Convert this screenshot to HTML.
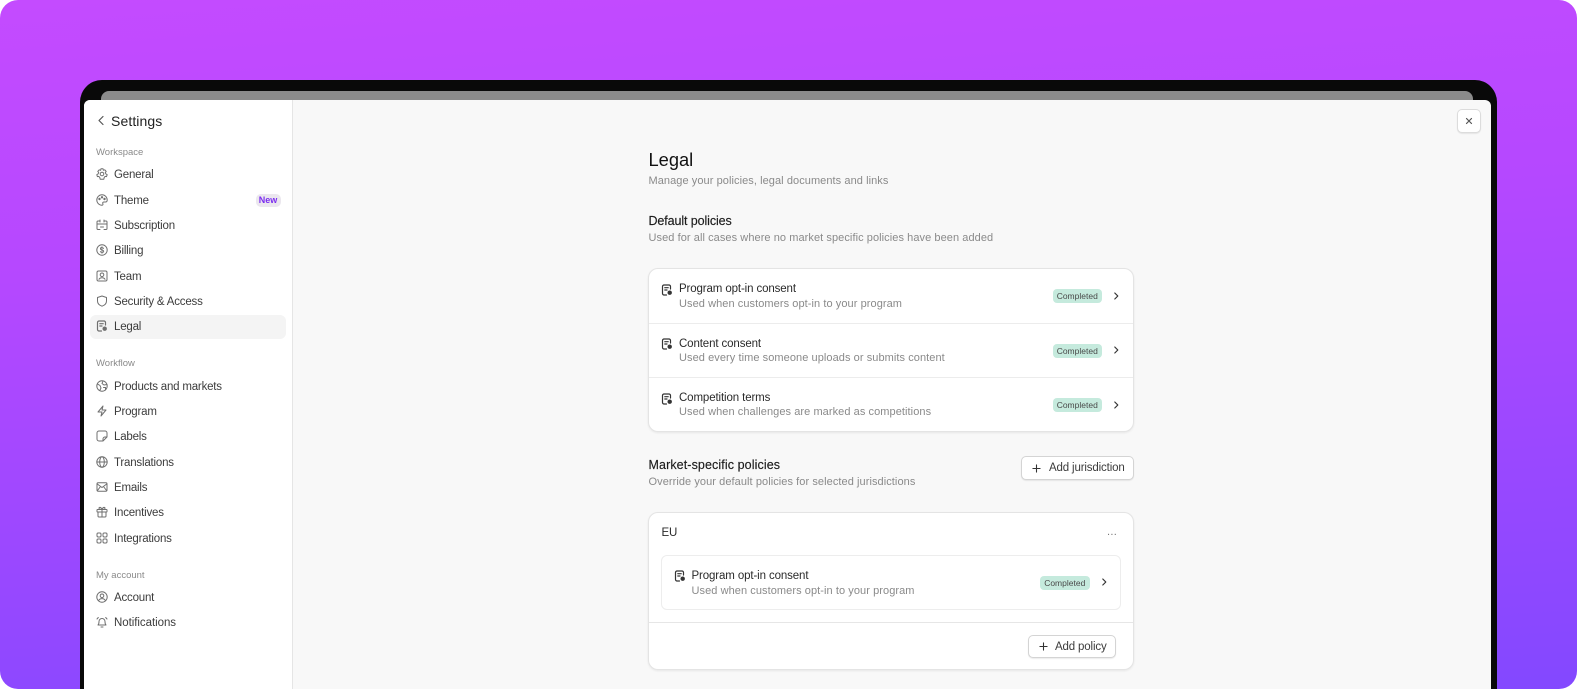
<!DOCTYPE html>
<html><head><meta charset="utf-8"><style>
html,body{margin:0;padding:0;background:#fff}
body{width:1577px;height:689px;overflow:hidden;position:relative;font-family:"Liberation Sans",sans-serif}
#bg{position:absolute;left:0;top:0;width:1577px;height:689px;border-radius:18px;overflow:hidden;background:linear-gradient(176deg,#c44bff 0%,#b548ff 35%,#8348ff 100%);filter:blur(.3px)}
#bg div,#bg svg.a{position:absolute}
.t{white-space:nowrap;line-height:16px;height:16px}
.n{font-size:11.5px;color:#3c3c3c;left:114px;letter-spacing:-.2px}
.h{font-size:9.5px;color:#8a8a8a;left:96px;letter-spacing:0}
.ti{font-size:11.5px;color:#2a2a2a;letter-spacing:-.12px}
.su{font-size:11px;color:#8a8a8a;letter-spacing:.07px}
.b{background:#c5eadd;border-radius:4px;width:49.5px;height:14px;font-size:8.5px;line-height:14px;text-align:center;color:#4a4a4a;letter-spacing:0}
.card{background:#fff;border:1px solid #e4e4e4;box-sizing:border-box;border-radius:10px;box-shadow:0 1px 2px rgba(0,0,0,.07)}
.btn{background:#fff;border:1px solid #d4d4d4;box-sizing:border-box;border-radius:5px;box-shadow:0 1px 1px rgba(0,0,0,.08)}
.bt{font-size:11.5px;color:#3c3c3c;letter-spacing:-.15px}
.l{height:1px;background:#ececec}
svg{fill:none;stroke:#6f6f6f;stroke-width:1.2;stroke-linecap:round;stroke-linejoin:round}
</style></head><body>
<svg width="0" height="0" style="position:absolute">
<defs>
<symbol id="doc" viewBox="0 0 12 12"><path d="M9.5 5V2.5A1.5 1.5 0 0 0 8 1H3A1.5 1.5 0 0 0 1.500 2.500V9.500A1.500 1.500 0 0 0 3 11H5.500M3.800 3.700H7.200M3.800 6H6"/><circle cx="8.700" cy="8.700" r="2.200" fill="currentColor" stroke="none"/></symbol>
<symbol id="chev" viewBox="0 0 8 10"><path d="M2.800 2L5.800 5L2.800 8"/></symbol>
<symbol id="plus" viewBox="0 0 10 10"><path d="M5 1V9M1 5H9"/></symbol>
</defs></svg>
<div id="bg">
<div style="left:80px;top:80px;width:1417px;height:640px;background:#090909;border-radius:22px 22px 0 0"></div>
<div style="left:101px;top:90.500px;width:1372px;height:20px;background:#8b8b8b;border-radius:8px 8px 0 0"></div>
<div style="left:84px;top:99.500px;width:1407px;height:600px;background:#f8f8f8;border-radius:6px 6px 0 0;overflow:hidden"></div>
<div style="left:84px;top:99.500px;width:208px;height:600px;background:#fff;border-right:1px solid #e5e5e5;border-radius:6px 0 0 0"></div>

<svg class="a" style="left:97px;top:115px;stroke:#555" width="8" height="11" viewBox="0 0 8 11"><path d="M6 1.500L2 5.500L6 9.500"/></svg>
<div class="t" style="left:111px;top:112.500px;font-size:14px;color:#222;letter-spacing:.1px">Settings</div>

<div class="t h" style="top:145px">Workspace</div>
<div class="t n" style="top:167px">General</div>
<svg class="a" style="left:96px;top:168px" width="12" height="12" viewBox="0 0 12 12"><path d="M5 .8H7L7.400 2.300L8.800 1.800L10.200 3.400L9.300 4.600L10 6L11.200 6.700L10.500 8.600L9.100 8.400L8.200 9.500L7.800 11.200H4.200L3.800 9.500L2.800 8.400L1.400 8.600L.8 6.700L2 6L2.700 4.600L1.800 3.400L3.200 1.800L4.600 2.300Z" stroke-width="1"/><circle cx="6" cy="6" r="1.800" stroke-width="1"/></svg>
<div class="t n" style="top:193px">Theme</div>
<svg class="a" style="left:96px;top:193.500px" width="12" height="12" viewBox="0 0 12 12"><path d="M6 .8A5.200 5.200 0 1 0 6 11.200C7 11.200 7.200 10.400 6.800 9.600C6.400 8.700 7 8 8 8H9.500C10.500 8 11.200 7.200 11.200 6A5.200 5.200 0 0 0 6 .8Z" stroke-width="1"/><circle cx="3.500" cy="5" r=".6" fill="#6f6f6f"/><circle cx="6" cy="3.300" r=".6" fill="#6f6f6f"/><circle cx="8.500" cy="5" r=".6" fill="#6f6f6f"/></svg>
<div class="t" style="left:255.500px;top:193.500px;width:25px;height:13.500px;background:#ebe7ee;border-radius:5px;font-size:9px;line-height:13.500px;font-weight:700;color:#7c2df0;text-align:center">New</div>
<div class="t n" style="top:218px">Subscription</div>
<svg class="a" style="left:96px;top:218.500px" width="12" height="12" viewBox="0 0 12 12"><path d="M4 2H2A1 1 0 0 0 1 3V9.500A1 1 0 0 0 2 10.500H4M8 2H10A1 1 0 0 1 11 3V9.500A1 1 0 0 1 10 10.500H8M1 5H11M4 1V3M8 1V3M4.500 8H7.500" stroke-width="1"/></svg>
<div class="t n" style="top:243px">Billing</div>
<svg class="a" style="left:96px;top:244px" width="12" height="12" viewBox="0 0 12 12"><circle cx="6" cy="6" r="5.200" stroke-width="1"/><path d="M7.600 4.500C7.300 3.800 6.700 3.500 6 3.500C5.100 3.500 4.400 4 4.400 4.700C4.400 6.300 7.700 5.600 7.700 7.300C7.700 8 7 8.500 6 8.500C5.200 8.500 4.600 8.200 4.300 7.500M6 2.700V9.300" stroke-width=".9"/></svg>
<div class="t n" style="top:269px">Team</div>
<svg class="a" style="left:96px;top:269.500px" width="12" height="12" viewBox="0 0 12 12"><rect x="1" y="1" width="10" height="10" rx="1.500" stroke-width="1"/><circle cx="6" cy="4.800" r="1.800" stroke-width="1"/><path d="M3 9.300C3.500 8 4.600 7.700 6 7.700S8.500 8 9 9.300" stroke-width="1"/></svg>
<div class="t n" style="top:294px">Security &amp; Access</div>
<svg class="a" style="left:96px;top:294.500px" width="12" height="12" viewBox="0 0 12 12"><path d="M6 1L10.500 2.500V6C10.500 8.700 8.500 10.300 6 11.200C3.500 10.300 1.500 8.700 1.500 6V2.500Z" stroke-width="1"/></svg>
<div style="left:90px;top:314.500px;width:196px;height:24px;background:#f4f4f4;border-radius:6px"></div>
<div class="t n" style="top:319px">Legal</div>
<svg class="a" style="left:96px;top:320px;color:#6f6f6f" width="12" height="12"><use href="#doc"/></svg>

<div class="t h" style="top:356px">Workflow</div>
<div class="t n" style="top:379px">Products and markets</div>
<svg class="a" style="left:96px;top:379.500px" width="12" height="12" viewBox="0 0 12 12"><circle cx="6" cy="6" r="5.200" stroke-width="1"/><path d="M1.500 4L4 5.500L5 8L3.800 10.500M7 1L6 3.500L8 5L11 4.500M7.500 7.500L9.500 7.500L9.500 10" stroke-width="1"/></svg>
<div class="t n" style="top:404px">Program</div>
<svg class="a" style="left:96px;top:404.500px" width="12" height="12" viewBox="0 0 12 12"><path d="M7 1L2 7H6L5 11L10 5H6Z" stroke-width="1"/></svg>
<div class="t n" style="top:429px">Labels</div>
<svg class="a" style="left:96px;top:430px" width="12" height="12" viewBox="0 0 12 12"><path d="M7 11H3A2 2 0 0 1 1 9V3A2 2 0 0 1 3 1H9A2 2 0 0 1 11 3V7ZM7 11V9A2 2 0 0 1 9 7H11" stroke-width="1"/></svg>
<div class="t n" style="top:455px">Translations</div>
<svg class="a" style="left:96px;top:455.500px" width="12" height="12" viewBox="0 0 12 12"><circle cx="6" cy="6" r="5.200" stroke-width="1"/><ellipse cx="6" cy="6" rx="2.300" ry="5.200" stroke-width="1"/><path d="M1 6H11" stroke-width="1"/></svg>
<div class="t n" style="top:480px">Emails</div>
<svg class="a" style="left:96px;top:480.500px" width="12" height="12" viewBox="0 0 12 12"><rect x="1" y="1.800" width="10" height="8.400" rx="1.200" stroke-width="1"/><path d="M1.300 3L6 6.500L10.700 3M1.500 9.500L4.500 5.500M10.500 9.500L7.500 5.500" stroke-width="1"/></svg>
<div class="t n" style="top:505px">Incentives</div>
<svg class="a" style="left:96px;top:506px" width="12" height="12" viewBox="0 0 12 12"><rect x="1" y="3.500" width="10" height="2.500" rx=".5" stroke-width="1"/><path d="M2 6V10A1 1 0 0 0 3 11H9A1 1 0 0 0 10 10V6M6 3.500V11M6 3.500C5 1 3 .8 3 2.200C3 3.200 4.500 3.500 6 3.500C7.500 3.500 9 3.200 9 2.200C9 .8 7 1 6 3.500Z" stroke-width="1"/></svg>
<div class="t n" style="top:531px">Integrations</div>
<svg class="a" style="left:96px;top:531.500px" width="12" height="12" viewBox="0 0 12 12"><rect x="1" y="1" width="4" height="4" rx="1.200" stroke-width="1"/><rect x="7" y="1" width="4" height="4" rx="1.200" stroke-width="1"/><rect x="1" y="7" width="4" height="4" rx="1.200" stroke-width="1"/><rect x="7" y="7" width="4" height="4" rx="1.200" stroke-width="1"/></svg>

<div class="t h" style="top:568px">My account</div>
<div class="t n" style="top:590px">Account</div>
<svg class="a" style="left:96px;top:591px" width="12" height="12" viewBox="0 0 12 12"><circle cx="6" cy="6" r="5.200" stroke-width="1"/><circle cx="6" cy="4.800" r="1.800" stroke-width="1"/><path d="M2.800 9.300C3.500 8 4.600 7.600 6 7.600S8.500 8 9.200 9.300" stroke-width="1"/></svg>
<div class="t n" style="top:615px;letter-spacing:-.05px">Notifications</div>
<svg class="a" style="left:96px;top:616px" width="12" height="12" viewBox="0 0 12 12"><path d="M2 9H10C9 8 9 7 9 5.500A3 3 0 0 0 3 5.500C3 7 3 8 2 9ZM5 11H7M1 3L2.300 1.500M11 3L9.700 1.500" stroke-width="1"/></svg>

<div class="btn" style="left:1457px;top:109px;width:24px;height:24px;border-radius:5px;border-color:#dcdcdc"></div>
<svg class="a" style="left:1465px;top:117px;stroke:#555" width="8" height="8" viewBox="0 0 8 8"><path d="M1.500 1.500L6.500 6.500M6.500 1.500L1.500 6.500"/></svg>

<div class="t" style="left:648.500px;top:151px;font-size:18.300px;color:#111;line-height:18px;height:18px">Legal</div>
<div class="t su" style="left:648.500px;top:172.500px">Manage your policies, legal documents and links</div>
<div class="t" style="left:648.500px;top:212.500px;font-size:12.500px;color:#1c1c1c;letter-spacing:-.1px;-webkit-text-stroke:.15px #1c1c1c">Default policies</div>
<div class="t su" style="left:648.500px;top:229.500px">Used for all cases where no market specific policies have been added</div>

<div class="card" style="left:648px;top:267.700px;width:485.500px;height:164.300px"></div>
<div class="l" style="left:649px;top:322.500px;width:483.500px"></div>
<div class="l" style="left:649px;top:377px;width:483.500px"></div>

<svg class="a" style="left:661px;top:283.500px;stroke:#333;color:#333" width="12" height="12"><use href="#doc"/></svg>
<div class="t ti" style="left:679px;top:281px">Program opt-in consent</div>
<div class="t su" style="left:679px;top:295.500px">Used when customers opt-in to your program</div>
<div class="b t" style="left:1052.500px;top:289px">Completed</div>
<svg class="a" style="left:1112px;top:291px;stroke:#333" width="8" height="10"><use href="#chev"/></svg>

<svg class="a" style="left:661px;top:338px;stroke:#333;color:#333" width="12" height="12"><use href="#doc"/></svg>
<div class="t ti" style="left:679px;top:335.500px">Content consent</div>
<div class="t su" style="left:679px;top:350px">Used every time someone uploads or submits content</div>
<div class="b t" style="left:1052.500px;top:343.500px">Completed</div>
<svg class="a" style="left:1112px;top:345px;stroke:#333" width="8" height="10"><use href="#chev"/></svg>

<svg class="a" style="left:661px;top:392.500px;stroke:#333;color:#333" width="12" height="12"><use href="#doc"/></svg>
<div class="t ti" style="left:679px;top:390px">Competition terms</div>
<div class="t su" style="left:679px;top:404px">Used when challenges are marked as competitions</div>
<div class="b t" style="left:1052.500px;top:398px">Completed</div>
<svg class="a" style="left:1112px;top:399.500px;stroke:#333" width="8" height="10"><use href="#chev"/></svg>

<div class="t" style="left:648.500px;top:457px;font-size:12.500px;color:#1c1c1c;letter-spacing:.1px;-webkit-text-stroke:.15px #1c1c1c">Market-specific policies</div>
<div class="t su" style="left:648.500px;top:474px">Override your default policies for selected jurisdictions</div>
<div class="btn" style="left:1021px;top:456px;width:112.500px;height:24px"></div>
<svg class="a" style="left:1032px;top:463.500px;stroke:#333" width="9" height="9"><use href="#plus"/></svg>
<div class="t bt" style="left:1049px;top:460px">Add jurisdiction</div>

<div class="card" style="left:648px;top:511.700px;width:485.500px;height:158px"></div>
<div class="t ti" style="left:661.500px;top:525px">EU</div>
<div class="t" style="left:1107px;top:524px;font-size:11px;color:#777;letter-spacing:.3px">...</div>
<div class="card" style="left:661px;top:555px;width:460px;height:54.500px;border-radius:6px;box-shadow:none;border-color:#ededed"></div>
<svg class="a" style="left:674px;top:570px;stroke:#333;color:#333" width="12" height="12"><use href="#doc"/></svg>
<div class="t ti" style="left:691.500px;top:568px">Program opt-in consent</div>
<div class="t su" style="left:691.500px;top:583px">Used when customers opt-in to your program</div>
<div class="b t" style="left:1040px;top:575.500px">Completed</div>
<svg class="a" style="left:1099.500px;top:577px;stroke:#333" width="8" height="10"><use href="#chev"/></svg>
<div class="l" style="left:649px;top:622px;width:483.500px;background:#e6e6e6"></div>
<div class="btn" style="left:1028px;top:634.500px;width:87.500px;height:23.500px"></div>
<svg class="a" style="left:1039px;top:642px;stroke:#333" width="9" height="9"><use href="#plus"/></svg>
<div class="t bt" style="left:1055px;top:638.500px">Add policy</div>
</div>
</body></html>
